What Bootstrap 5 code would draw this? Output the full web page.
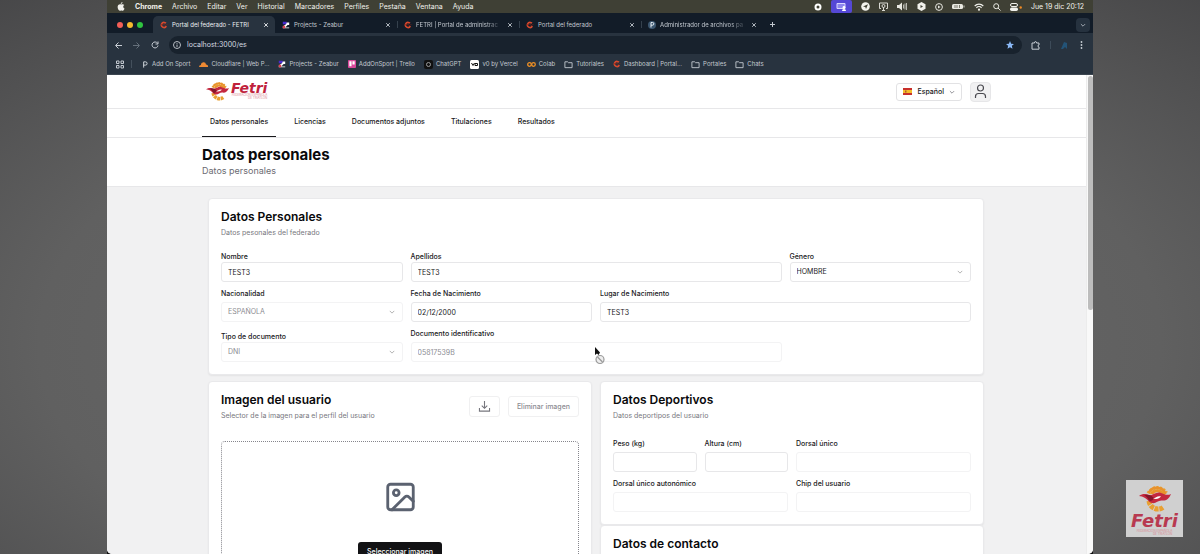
<!DOCTYPE html>
<html lang="es">
<head>
<meta charset="utf-8">
<meta name="viewport" content="width=device-width, initial-scale=1">
<title>Portal del federado - FETRI</title>
<link href="https://cdn.jsdelivr.net/npm/bootstrap@5.3.0/dist/css/bootstrap.min.css" rel="stylesheet">
<script src="https://cdn.jsdelivr.net/npm/bootstrap@5.3.0/dist/js/bootstrap.bundle.min.js"></script>
<style>
  :root { --ink: #18181b; --line: #e7e7e9; --chrome: #28333f; --deep: #121c28; }
  html, body { height: 100%; }
  body { font-family: Inter, "Liberation Sans", sans-serif; font-size: 7px; line-height: 10px; color: var(--ink);
    background: radial-gradient(ellipse 85% 95% at 50% 62%, #6c6c6c, #606060 55%, #3f3f41 100%); overflow: hidden; }
  svg { display: block; flex: none; }
  button, input, select { font-family: inherit; }
  .desk { margin: 0 107px; height: 100vh; background: #111; }
  /* system menu bar */
  .menubar { height: 13px; background: #3f4035; color: #f1f1ec; padding: 0 9px 0 10px; }
  .menubar a { color: inherit; text-decoration: none; }
  .menus { gap: 10px; }
  .status { gap: 9px; }
  .share { background: #5548d6; padding: 2px 5px; border-radius: 2px; }
  /* browser */
  .browser { height: calc(100vh - 13px); border-radius: 0 0 5px 5px; overflow: hidden; background: #fff; }
  .tabstrip { height: 20px; background: var(--deep); color: #c3c9d0; padding: 3px 3px 0 10px; }
  .light { width: 6px; height: 6px; border-radius: 50%; }
  .light-r { background: #f25e57; } .light-y { background: #f6b92e; } .light-g { background: #2fc440; }
  .lights { gap: 4px; width: 36px; }
  .tab-item { width: 122px; height: 17px; padding: 0 6px 0 7px; gap: 4px; position: relative; font-size: 6px; }
  .tab-item.on { background: var(--chrome); border-radius: 5px 5px 0 0; color: #edf0f3; }
  .tab-item + .tab-item:not(.after-on)::before { content: ""; position: absolute; left: 0; top: 5px; height: 7px; border-left: 1px solid #35414d; }
  .tab-name { flex: 1; white-space: nowrap; }
  .fade-end { -webkit-mask-image: linear-gradient(90deg, #000 80%, transparent); mask-image: linear-gradient(90deg, #000 80%, transparent); }
  .bare { border: 0; background: none; padding: 0; color: inherit; line-height: 10px; }
  .tab-plus { margin-left: 6px; }
  .tab-more { width: 14px; height: 14px; border-radius: 4px; background: #26323f; display: grid; place-items: center; }
  .toolbar { height: 21px; background: var(--chrome); color: #c8ced5; padding: 3px 8px 0 8px; }
  .steer { gap: 11px; width: 54px; }
  .extras { gap: 10px; padding-left: 9px; }
  .urlbar { height: 18px; border-radius: 9px; background: #18222d; padding: 0 8px 0 4px; gap: 6px; }
  .urlbar input { border: 0; background: none; color: #d6dbe0; padding: 0; flex: 1; font-size: 7px; line-height: 10px; }
  .bookmarks { height: 21px; background: var(--chrome); color: #c3c9d0; padding: 0 8px; gap: 9px; border-bottom: 1px solid #3c4650; white-space: nowrap; }
  .bookmarks a { color: inherit; text-decoration: none; gap: 3px; font-size: 6px; }
  .appgrid { gap: 6px; }
  /* page */
  .viewport { height: calc(100% - 62px); overflow: hidden; }
  .page { background: #f1f1f2; }
  .track { width: 7px; background: #f9f9f9; border-left: 1px solid #ececec; }
  .thumb { width: 5px; height: 234px; margin: 1px 0 0 1px; border-radius: 3px; background: #bdbdbd; }
  .wrap { max-width: 789px; margin: 0 auto; }
  .band { background: #fff; border-bottom: 1px solid var(--line); }
  .brandrow { height: 33px; }
  .brand { padding-left: 4px; gap: 2px; }
  .logo-name { font: italic bold 14px/12px "DejaVu Sans", sans-serif; color: #c0223c; }
  .logo-sub { font-size: 3px; line-height: 3px; color: #d98a93; text-align: right; }
  .lang { border: 1px solid #e2e2e4; border-radius: 3px; background: #fff; height: 18px; padding: 0 6px; font-size: 7px; font-weight: 500; gap: 5px; line-height: 10px; color: var(--ink); }
  .user { width: 21px; height: 20px; border: 1px solid #e6e6e8; border-radius: 4px; background: #f1f1f2; display: grid; place-items: center; padding: 0; }
  .mainnav a { height: 28px; padding: 8px 8px 0; margin-right: 10px; color: var(--ink); text-decoration: none; font-weight: 500; font-size: 7px; }
  .mainnav a.on { border-bottom: 1px solid var(--ink); }
  .titleband { height: 48px; padding-top: 8px; }
  .titleband h1 { font-size: 15px; line-height: 18px; font-weight: 700; color: #09090b; margin: 0; }
  .titleband p { font-size: 9px; line-height: 14px; color: #6b6b72; margin: 0; }
  .panels { padding: 11px 7px 0 6px; }
  .panel { background: #fff; border: 1px solid #e9e9eb; border-radius: 4px; padding: 10px 12px 12px; box-shadow: 0 1px 2px rgba(0,0,0,.06); }
  .panel h2 { font-size: 12px; line-height: 16px; font-weight: 600; margin: 0; color: #09090b; }
  .hint { font-size: 7px; line-height: 10px; color: #77777e; margin: 3px 0 0; }
  .tight { --bs-gutter-x: 8px; --bs-gutter-y: 0; }
  .first-a { margin-top: 14px; }
  .first-b { margin-top: 18px; }
  .next { margin-top: 7px; }
  .lower { margin-top: 6px; }
  .fields label { display: block; font-size: 7px; line-height: 10px; font-weight: 500; margin-bottom: 3px; }
  .fields label.near { margin-bottom: 0; }
  .fields .form-control, .fields .form-select { height: 20px; min-height: 0; padding: 0 6px; font-size: 7px; line-height: 10px; border: 1px solid var(--line); border-radius: 3px; color: var(--ink); background-color: #fff; }
  .fields .form-select { background-size: 6px 6px; background-position: right 7px center; padding-right: 16px;
    background-image: url("data:image/svg+xml,%3csvg xmlns='http://www.w3.org/2000/svg' viewBox='0 0 16 16'%3e%3cpath fill='none' stroke='%23999' stroke-width='2' d='m2 5 6 6 6-6'/%3e%3c/svg%3e"); }
  .fields :disabled { border-color: #f3f3f4; color: #8c8c92; opacity: 1; }
  .ghost { border: 1px solid #f0f0f1; border-radius: 3px; background: #fff; height: 21px; font-size: 7px; line-height: 10px; font-weight: 500; color: #8c8c92; padding: 0 8px; }
  .drop { border: 1px dotted #85858c; border-radius: 4px; height: 180px; margin-top: 20px; padding-top: 38px; }
  .pick { background: #121214; color: #fafafa; border: 0; border-radius: 3px; width: 84px; height: 20px; font-size: 7px; line-height: 10px; font-weight: 500; padding: 0; margin-top: 28px; }
  .pointer { position: absolute; left: 594px; top: 347px; }
  .watermark { position: absolute; right: 17px; bottom: 17px; width: 57px; height: 57px; background: #d0d0d0; padding-top: 6px; }
  .watermark .logo-name { font-size: 18px; line-height: 18px; color: #b83a50; }
</style>
</head>
<body>
<svg width="0" height="0" class="position-absolute">
  <symbol id="fetri" viewBox="0 0 32 26">
    <path d="M11 7.500A8.500 8.500 0 0 1 26.500 9l-3 .5A5.500 5.500 0 0 0 14 8.500z" fill="#e8922c"/>
    <path d="M9.500 7.500A10 10 0 0 1 27 7" fill="none" stroke="#e8a032" stroke-width="4" stroke-dasharray="2 1.300"/>
    <path d="M10 6.500A9 9 0 0 1 26.500 8" fill="none" stroke="#e8922c" stroke-width="2.500"/>
    <path d="M10 15a9 9 0 0 0 14 6.500" fill="none" stroke="#e8a032" stroke-width="5" stroke-dasharray="4 .8"/>
    <path d="M0 10c4-3 7-2 10-1 4 1 7-4 12-2 3 1 6 3 10 1-2 5-5 7-9 6.500-4-.5-6 3.500-10 2.500-5-1-4-6-13-7z" fill="#c4283f"/>
    <path d="M5 9c5-1 7 0 10 3-1 2-2 3-4 3-2-1-2-4-6-6z" fill="#86162a"/>
    <path d="M14 12.500c3 0 4-3 8-2-2 2-4 3-8 2z" fill="#fff"/>
  </symbol>
  <symbol id="cmark" viewBox="0 0 10 10"><circle cx="5" cy="5" r="3.200" fill="none" stroke="#d8492e" stroke-width="2" stroke-dasharray="16 4" transform="rotate(25 5 5)"/><path d="M1 5q4-2 5 0t3-1" stroke="#8d2418" fill="none"/></symbol>
  <symbol id="zea" viewBox="0 0 10 10"><path d="M1 1h5v3H1z" fill="#4a2bd0"/><path d="M6 2h3v3H7L4 8h5v1H1V7l4-3z" fill="#fff"/><path d="M1 6h3v3H1z" fill="#e0404f"/></symbol>
  <symbol id="folder" viewBox="0 0 10 10"><path d="M1 2h3l1 1h4v5.500H1z" fill="none" stroke="currentColor"/></symbol>
  <symbol id="cross" viewBox="0 0 10 10"><path d="M2 2l6 6M8 2l-6 6" stroke="currentColor" stroke-width="1.500"/></symbol>
  <symbol id="down" viewBox="0 0 10 10"><path d="M1.500 3.500 5 7l3.500-3.500" fill="none" stroke="currentColor" stroke-width="1.300"/></symbol>
</svg>

<div class="desk">
  <header class="menubar d-flex align-items-center justify-content-between">
    <nav class="menus d-flex align-items-center">
      <svg width="8" height="9" viewBox="0 0 16 18" fill="currentColor"><path d="M11 0c0 2-1.500 4-3.500 4C7.500 2 9 .5 11 0zM12.500 9.500c0-2 1.500-3 2-3.500-2-2.500-4.500-1.500-6-1-1.500-.5-4-1-6 1-3 4 0 11 3 11.500 1 0 1.500-.7 3-.7s2 .7 3 .7c2-.5 3-3 3.500-4.500-1.500-.5-2.500-2-2.500-3.500z"/></svg>
      <a href="#" class="fw-bold">Chrome</a><a href="#">Archivo</a><a href="#">Editar</a><a href="#">Ver</a><a href="#">Historial</a><a href="#">Marcadores</a><a href="#">Perfiles</a><a href="#">Pestaña</a><a href="#">Ventana</a><a href="#">Ayuda</a>
    </nav>
    <div class="status d-flex align-items-center">
      <svg width="8" height="8" viewBox="0 0 8 8"><circle cx="4" cy="4" r="2.500" fill="none" stroke="#fff" stroke-width="2"/></svg>
      <div class="share"><svg width="11" height="9" viewBox="0 0 11 9"><path d="M1 1.500h8v5H1z" fill="#8d86ee" stroke="#d9d6ff"/><path d="M6 9a2 2 0 0 1 4 0z" fill="#fff"/><circle cx="8" cy="5.500" r="1.400" fill="#fff"/></svg></div>
      <svg width="9" height="9" viewBox="0 0 9 9"><circle cx="4.500" cy="4.500" r="4.300" fill="#f3f3ee"/><path d="M2 4.500 7 2.300 5 7 4.300 5z" fill="#3f4035"/></svg>
      <svg width="9" height="9" viewBox="0 0 9 9" fill="none" stroke="#d9d9d2"><path d="M2 6.500H.5V1h8v5.500H7"/><circle cx="4.500" cy="4" r="1.500"/><path d="M3 8.500h3M4.500 5v3"/></svg>
      <svg width="11" height="9" viewBox="0 0 11 9"><path d="M0 3h2l3-2.500v8L2 6H0z" fill="#e8e8e2"/><path d="M6.500 2.500v4M8 1.500v6M9.500 1v7" stroke="#b9b9b2"/></svg>
      <svg width="9" height="9" viewBox="0 0 9 9"><path d="M4.500 0 8.500 2.200v4.600L4.500 9 .5 6.800V2.200z" fill="#f1f1ec"/><path d="M3.500 3v3L6 4.500z" fill="#3f4035"/></svg>
      <svg width="8" height="8" viewBox="0 0 8 8"><circle cx="4" cy="4" r="3.400" fill="none" stroke="#e8e8e2"/><path d="M3 2.500v3L5.500 4z" fill="#e8e8e2"/></svg>
      <svg width="13" height="7" viewBox="0 0 13 7"><rect x="0" y="1" width="11" height="5" rx="1.500" fill="#e8e8e2"/><path d="M12 2.500v2" stroke="#c9c9c2"/><path d="M3 2v3M5 2v3M7.500 2v3" stroke="#77776c"/></svg>
      <svg width="10" height="8" viewBox="0 0 10 8" fill="none" stroke="#f1f1ec" stroke-width="1.200"><path d="M.7 3a6 6 0 0 1 8.600 0M2.400 4.700a3.700 3.700 0 0 1 5.200 0"/><circle cx="5" cy="6.700" r=".5"/></svg>
      <svg width="8" height="8" viewBox="0 0 8 8" fill="none" stroke="#e8e8e2"><circle cx="3.200" cy="3.200" r="2.500"/><path d="m5 5 2.500 2.500"/></svg>
      <svg width="12" height="8" viewBox="0 0 12 8"><rect x=".5" y=".5" width="7" height="3" rx="1.500" fill="none" stroke="#f1f1ec"/><rect x="0" y="4.500" width="8" height="3.500" rx="1.700" fill="#f1f1ec"/><circle cx="10.700" cy="4.500" r="1.200" fill="#f08a24"/></svg>
      <span>Jue 19 dic 20:12</span>
    </div>
  </header>

  <div class="browser">
    <div class="tabstrip d-flex align-items-center">
      <div class="lights d-flex"><span class="light light-r"></span><span class="light light-y"></span><span class="light light-g"></span></div>
      <div class="tab-item on d-flex align-items-center"><svg width="8" height="8"><use href="#cmark"/></svg><span class="tab-name">Portal del federado - FETRI</span><button class="bare" aria-label="Cerrar"><svg width="6" height="6"><use href="#cross"/></svg></button></div>
      <div class="tab-item after-on d-flex align-items-center"><svg width="8" height="8"><use href="#zea"/></svg><span class="tab-name">Projects - Zeabur</span><button class="bare" aria-label="Cerrar"><svg width="6" height="6"><use href="#cross"/></svg></button></div>
      <div class="tab-item d-flex align-items-center"><svg width="8" height="8"><use href="#cmark"/></svg><span class="tab-name fade-end">FETRI | Portal de administrac</span><button class="bare" aria-label="Cerrar"><svg width="6" height="6"><use href="#cross"/></svg></button></div>
      <div class="tab-item d-flex align-items-center"><svg width="8" height="8"><use href="#cmark"/></svg><span class="tab-name">Portal del federado</span><button class="bare" aria-label="Cerrar"><svg width="6" height="6"><use href="#cross"/></svg></button></div>
      <div class="tab-item d-flex align-items-center"><svg width="8" height="8" viewBox="0 0 8 8"><circle cx="4" cy="4" r="4" fill="#3c5770"/><path d="M3 6.500v-5h1.500a1.300 1.300 0 0 1 0 2.700H3" fill="none" stroke="#e6edf3"/></svg><span class="tab-name fade-end">Administrador de archivos pa</span><button class="bare" aria-label="Cerrar"><svg width="6" height="6"><use href="#cross"/></svg></button></div>
      <button class="bare tab-plus" aria-label="Nueva pestaña"><svg width="7" height="7" viewBox="0 0 7 7"><path d="M3.500 1v5M1 3.500h5" stroke="currentColor"/></svg></button>
      <button class="bare tab-more ms-auto" aria-label="Buscar pestañas"><svg width="6" height="6"><use href="#down"/></svg></button>
    </div>
    <div class="toolbar d-flex align-items-center">
      <div class="steer d-flex align-items-center">
        <svg width="7" height="7" viewBox="0 0 7 7" fill="none" stroke="currentColor"><path d="M7 3.500H1M3.500.5l-3 3 3 3"/></svg>
        <svg width="7" height="7" viewBox="0 0 7 7" fill="none" stroke="#65707b"><path d="M0 3.500h6M3.500.5l3 3-3 3"/></svg>
        <svg width="8" height="8" viewBox="0 0 8 8" fill="none" stroke="currentColor"><path d="M6.500 2.200A3 3 0 1 0 7 4.500M7 .5V3H4.500"/></svg>
      </div>
      <div class="urlbar d-flex align-items-center flex-grow-1">
        <svg width="8" height="8" viewBox="0 0 8 8" fill="none" stroke="currentColor" stroke-width=".9"><circle cx="4" cy="4" r="3.500"/><path d="M4 3.500V6M4 2v.8"/></svg>
        <input type="text" aria-label="Dirección" value="localhost:3000/es">
        <svg width="8" height="8" viewBox="0 0 16 16" fill="#8ab8f5"><path d="m8 0 2.300 5.300 5.700.5-4.300 3.800L13 15.500 8 12.400l-5 3.100 1.300-5.900L0 5.800l5.700-.5z"/></svg>
      </div>
      <div class="extras d-flex align-items-center">
        <svg width="9" height="9" viewBox="0 0 9 9" fill="none" stroke="currentColor"><path d="M1 2h2.500q0-1.500 1-1.500t1 1.500H8v2q-1.200.2-1.200 1T8 6v2.200H1z"/></svg>
        <svg width="1" height="8"><path d="M.5 0v8" stroke="#3d4b59"/></svg>
        <svg width="7" height="9" viewBox="0 0 7 9"><path d="M0 8 3 1l3 1v6L4 6 2 8z" fill="#235377"/></svg>
        <svg width="7" height="8" viewBox="0 0 7 8" fill="currentColor"><circle cx="3.500" cy="1" r=".9"/><circle cx="3.500" cy="4" r=".9"/><circle cx="3.500" cy="7" r=".9"/></svg>
      </div>
    </div>
    <nav class="bookmarks d-flex align-items-center">
      <div class="appgrid d-flex align-items-center">
        <svg width="10" height="9" viewBox="0 0 9 9" fill="none" stroke="currentColor"><path d="M1 1h2.500v2.500H1zM5.500 1H8v2.500H5.500zM1 5.500h2.500V8H1zM5.500 5.500H8V8H5.500z"/></svg>
        <svg width="1" height="8"><path d="M.5 0v8" stroke="#44505c"/></svg>
      </div>
      <a class="d-flex align-items-center" href="#"><svg width="8" height="9" viewBox="0 0 9 9"><path d="M3 8V1.500h2a1.800 1.800 0 0 1 0 3.700H3" fill="none" stroke="#dfe5ea"/></svg>Add On Sport</a>
      <a class="d-flex align-items-center" href="#"><svg width="9" height="9" viewBox="0 0 9 9"><path d="M0 7a2 2 0 0 1 2-2 2.500 2.500 0 0 1 5-.5A2 2 0 0 1 9 7z" fill="#ee8a33"/></svg>Cloudflare | Web P...</a>
      <a class="d-flex align-items-center" href="#"><svg width="8" height="8"><use href="#zea"/></svg>Projects - Zeabur</a>
      <a class="d-flex align-items-center" href="#"><svg width="8" height="8" viewBox="0 0 9 9"><rect width="9" height="9" rx="1" fill="#d8489b"/><path d="M1.500 1.500H4v5.500H1.500zM5 1.500h2.500V5H5z" fill="#fff"/></svg>AddOnSport | Trello</a>
      <a class="d-flex align-items-center" href="#"><svg width="9" height="9" viewBox="0 0 9 9"><rect width="9" height="9" rx="2" fill="#111"/><circle cx="4.500" cy="4.500" r="2" fill="none" stroke="#999"/></svg>ChatGPT</a>
      <a class="d-flex align-items-center" href="#"><svg width="9" height="9" viewBox="0 0 9 9"><rect width="9" height="9" rx="1.500" fill="#fff"/><path d="m1.500 3 1.500 2.500L4.500 3M5 5.500h2.500v-2H5z" fill="none" stroke="#111"/></svg>v0 by Vercel</a>
      <a class="d-flex align-items-center" href="#"><svg width="9" height="9" viewBox="0 0 9 9" fill="none" stroke="#ee9025" stroke-width="1.300"><circle cx="2.500" cy="4.500" r="1.800"/><circle cx="6.500" cy="4.500" r="1.800"/></svg>Colab</a>
      <a class="d-flex align-items-center" href="#"><svg width="9" height="9"><use href="#folder"/></svg>Tutoriales</a>
      <a class="d-flex align-items-center" href="#"><svg width="8" height="8"><use href="#cmark"/></svg>Dashboard | Portal...</a>
      <a class="d-flex align-items-center" href="#"><svg width="9" height="9"><use href="#folder"/></svg>Portales</a>
      <a class="d-flex align-items-center" href="#"><svg width="9" height="9"><use href="#folder"/></svg>Chats</a>
    </nav>

    <div class="viewport d-flex">
      <main class="page flex-grow-1">
        <div class="band"><div class="wrap brandrow d-flex align-items-center">
          <a href="#" class="brand d-flex text-decoration-none" aria-label="Fetri">
            <svg width="23" height="19"><use href="#fetri"/></svg>
            <span><span class="logo-name d-block">Fetri</span><span class="logo-sub d-block">FEDERACIÓN ESPAÑOLA<br>DE TRIATLÓN</span></span>
          </a>
          <button class="lang d-flex align-items-center ms-auto me-2"><svg width="9" height="7" viewBox="0 0 9 7"><path d="M0 0h9v7H0z" fill="#c8302b"/><path d="M0 2h9v3H0z" fill="#f4bd2c"/><path d="M2 2.500h1.500v2H2z" fill="#b0602b"/></svg>Español<svg width="6" height="6" color="#77777e"><use href="#down"/></svg></button>
          <button class="user" aria-label="Usuario"><svg width="13" height="15" viewBox="0 0 13 15" fill="none" stroke="#4a4a50" stroke-width="1.200"><circle cx="6.500" cy="4" r="3"/><path d="M1.500 14v-1.500a3 3 0 0 1 3-3h4a3 3 0 0 1 3 3V14"/></svg></button>
        </div></div>
        <div class="band"><nav class="wrap mainnav d-flex">
          <a href="#" class="on">Datos personales</a><a href="#">Licencias</a><a href="#">Documentos adjuntos</a><a href="#">Titulaciones</a><a href="#">Resultados</a>
        </nav></div>
        <div class="band"><div class="wrap titleband"><h1>Datos personales</h1><p>Datos personales</p></div></div>

        <div class="wrap panels">
          <section class="panel fields">
            <h2>Datos Personales</h2>
            <p class="hint">Datos pesonales del federado</p>
            <div class="row tight first-a">
              <div class="col-3"><label class="near" for="nombre">Nombre</label><input class="form-control" id="nombre" value="TEST3"></div>
              <div class="col-6"><label class="near" for="apellidos">Apellidos</label><input class="form-control" id="apellidos" value="TEST3"></div>
              <div class="col-3"><label class="near" for="genero">Género</label><select class="form-select" id="genero"><option>HOMBRE</option></select></div>
            </div>
            <div class="row tight next">
              <div class="col-3"><label for="nac">Nacionalidad</label><select class="form-select" id="nac" disabled><option>ESPAÑOLA</option></select></div>
              <div class="col-3"><label for="fecha">Fecha de Nacimiento</label><input class="form-control" id="fecha" value="02/12/2000"></div>
              <div class="col-6"><label for="lugar">Lugar de Nacimiento</label><input class="form-control" id="lugar" value="TEST3"></div>
            </div>
            <div class="row tight next">
              <div class="col-3 align-self-end"><label class="near" for="tipo">Tipo de documento</label><select class="form-select" id="tipo" disabled><option>DNI</option></select></div>
              <div class="col-6"><label for="doc">Documento identificativo</label><input class="form-control" id="doc" value="05817539B" disabled></div>
            </div>
          </section>

          <div class="row tight lower">
            <div class="col-6">
              <section class="panel">
                <div class="d-flex align-items-center">
                  <div class="me-auto"><h2>Imagen del usuario</h2><p class="hint">Selector de la imagen para el perfil del usuario</p></div>
                  <button class="ghost me-2" aria-label="Descargar"><svg width="13" height="11" viewBox="0 0 13 12" fill="none" stroke="#77777e" stroke-width="1.200"><path d="M6.500 0v7.500M3.500 5l3 3 3-3M1 7.500V11h11V7.500"/></svg></button>
                  <button class="ghost" disabled>Eliminar imagen</button>
                </div>
                <div class="drop d-flex flex-column align-items-center">
                  <svg width="35" height="34" viewBox="0 0 24 24" fill="none" stroke="#5b6270" stroke-width="2" stroke-linecap="round" stroke-linejoin="round"><rect x="3" y="3" width="18" height="18" rx="2"/><circle cx="9" cy="9" r="2"/><path d="m21 15-3.086-3.086a2 2 0 0 0-2.828 0L6 21"/></svg>
                  <button class="pick">Seleccionar imagen</button>
                </div>
              </section>
            </div>
            <div class="col-6 fields">
              <section class="panel">
                <h2>Datos Deportivos</h2>
                <p class="hint">Datos deportipos del usuario</p>
                <div class="row tight first-b">
                  <div class="col-3"><label for="peso">Peso (kg)</label><input class="form-control" id="peso"></div>
                  <div class="col-3"><label for="altura">Altura (cm)</label><input class="form-control" id="altura"></div>
                  <div class="col-6"><label for="dorsal">Dorsal único</label><input class="form-control" id="dorsal" disabled></div>
                </div>
                <div class="row tight next">
                  <div class="col-6"><label for="dorsala">Dorsal único autonómico</label><input class="form-control" id="dorsala" disabled></div>
                  <div class="col-6"><label for="chip">Chip del usuario</label><input class="form-control" id="chip" disabled></div>
                </div>
              </section>
              <section class="panel"><h2>Datos de contacto</h2></section>
            </div>
          </div>
        </div>
      </main>
      <div class="track"><div class="thumb"></div></div>
    </div>
  </div>
</div>

<svg class="pointer" width="12" height="18" viewBox="0 0 12 18"><path d="M1 0v8l2-1.500L4.500 8 6 5.500z" fill="#111"/><circle cx="6" cy="12.500" r="4" fill="#eee" stroke="#9a9a9a" stroke-width="1.200"/><path d="m3.500 10 5 5" stroke="#9a9a9a" stroke-width="1.200"/></svg>
<div class="watermark d-flex flex-column align-items-center">
  <svg width="32" height="26"><use href="#fetri"/></svg>
  <span class="logo-name">Fetri</span>
  <span class="logo-sub">FEDERACIÓN ESPAÑOLA<br>DE TRIATLÓN</span>
</div>
</body>
</html>
